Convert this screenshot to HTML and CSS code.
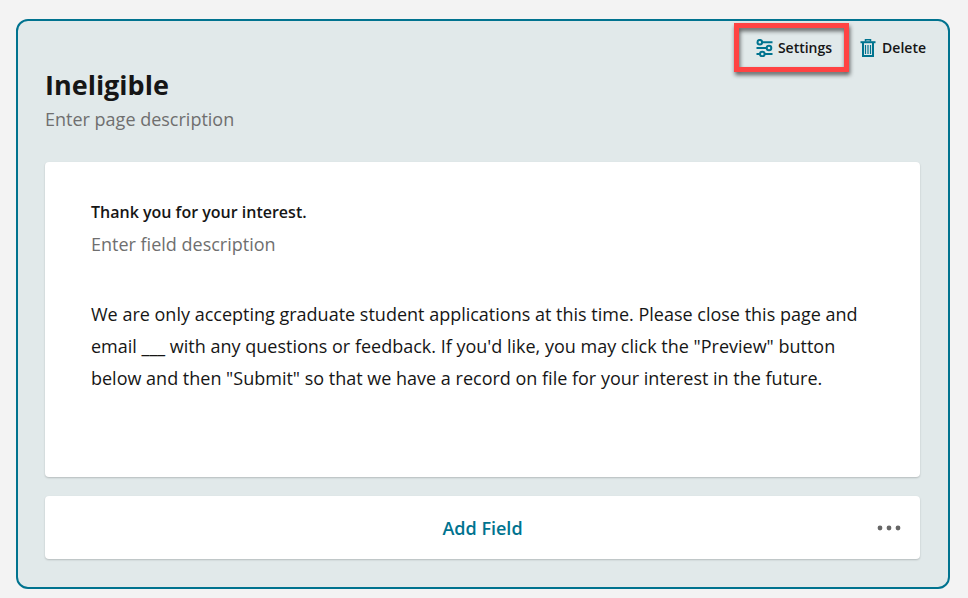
FILE: index.html
```html
<!DOCTYPE html>
<html lang="en">
<head>
    <meta charset="UTF-8">
    <meta name="viewport" content="width=device-width, initial-scale=1.0">
    <title>Form Builder</title>
    <link rel="stylesheet" href="styles.css">
</head>
<body>
    <main class="page-panel">
        <div class="toolbar">
            <button type="button" class="tool-button highlighted">
                <svg class="icon" viewBox="0 0 17 18" aria-hidden="true">
                    <g fill="none" stroke="currentColor" stroke-width="2">
                        <circle cx="3.8" cy="3.2" r="2.3"/>
                        <path d="M6 3.200h10.500M.5 9h10"/>
                        <circle cx="13" cy="9" r="2.3"/>
                        <path d="M.5 15h3.500M8.500 15h8"/>
                        <circle cx="6.3" cy="15" r="2.3"/>
                    </g>
                </svg>
                Settings
            </button>
            <button type="button" class="tool-button">
                <svg class="icon" viewBox="0 0 17 18" aria-hidden="true">
                    <g fill="none" stroke="currentColor">
                        <path stroke-width="1.500" d="M5.500 2.500V.8h5v1.700"/>
                        <path stroke-width="2" d="M.5 3.200h15"/>
                        <path stroke-width="2" d="M3 4v13h10V4"/>
                        <path stroke-width="1.200" d="M5.500 6v9M8 6v9M10.500 6v9"/>
                    </g>
                </svg>
                Delete
            </button>
        </div>

        <header class="page-header">
            <h1>Ineligible</h1>
            <input type="text" class="description" placeholder="Enter page description" aria-label="Page description">
        </header>

        <section class="card field">
            <h2>Thank you for your interest.</h2>
            <input type="text" class="description" placeholder="Enter field description" aria-label="Field description">
            <p>We are only accepting graduate student applications at this time. Please close this page and email ___ with any questions or feedback. If you'd like, you may click the "Preview" button below and then "Submit" so that we have a record on file for your interest in the future.</p>
        </section>

        <div class="card add-row">
            <button type="button" class="add-button">Add Field</button>
            <button type="button" class="more-button" aria-label="More options">
                <svg viewBox="0 0 24 6" aria-hidden="true">
                    <g fill="currentColor">
                        <circle cx="3" cy="3" r="2.4"/>
                        <circle cx="12" cy="3" r="2.4"/>
                        <circle cx="21" cy="3" r="2.4"/>
                    </g>
                </svg>
            </button>
        </div>
    </main>
</body>
</html>
```

FILE: styles.css
```css
* {
    box-sizing: border-box;
}

body {
    margin: 0;
    padding: 19px 18px 9px 16px;
    background-color: #f3f3f3;
    color: #161616;
    font-family: "Open Sans", "Noto Sans", sans-serif;
    font-size: 18px;
    line-height: 32px;
}

h1, h2, p {
    margin: 0;
}

button {
    padding: 0;
    border: none;
    background: none;
    color: inherit;
    font: inherit;
    cursor: pointer;
}

.page-panel {
    padding: 0 28px 28px 27px;
    background-color: #e1e9ea;
    border: 2px solid #00738f;
    border-radius: 12px;
}

.toolbar {
    display: flex;
    justify-content: flex-end;
    gap: 28px;
    margin-right: -6px;
    padding: 15px 0 7px;
}

.tool-button {
    position: relative;
    display: flex;
    align-items: center;
    gap: 5px;
    font-size: 14px;
    font-weight: 600;
    line-height: 24px;
}

.icon {
    width: 17px;
    height: 18px;
    color: #00738f;
}

/* red frame around the settings button */
.highlighted::after {
    content: "";
    position: absolute;
    inset: -13px -17px -12px -22px;
    border: 5px solid #ff4343;
    filter: drop-shadow(1px 3px 2px rgba(0, 0, 0, 0.6));
}

.page-header {
    padding-bottom: 27px;
}

h1 {
    font-size: 27px;
    font-weight: 700;
    line-height: 36px;
}

h2 {
    font-size: 16px;
    font-weight: 600;
    line-height: 32px;
}

.description {
    display: block;
    width: 100%;
    height: 32px;
    padding: 0;
    border: none;
    background: none;
    color: inherit;
    font: inherit;
}

.description::placeholder {
    color: #6f6f6f;
    opacity: 1;
}

.card {
    background-color: #fff;
    border-radius: 4px;
    box-shadow: 0 1px 2px rgba(0, 0, 0, 0.2);
}

.field {
    padding: 34px 46px 83px;
}

.field p {
    margin-top: 38px;
}

.add-row {
    display: grid;
    grid-template-columns: 1fr auto 1fr;
    align-items: center;
    margin-top: 19px;
    padding: 16px 19px 15px;
}

.add-button {
    grid-column: 2;
    color: #00738f;
    font-weight: 600;
}

.more-button {
    display: flex;
    justify-self: end;
    color: #666;
}

.more-button svg {
    width: 24px;
    height: 6px;
}
```
